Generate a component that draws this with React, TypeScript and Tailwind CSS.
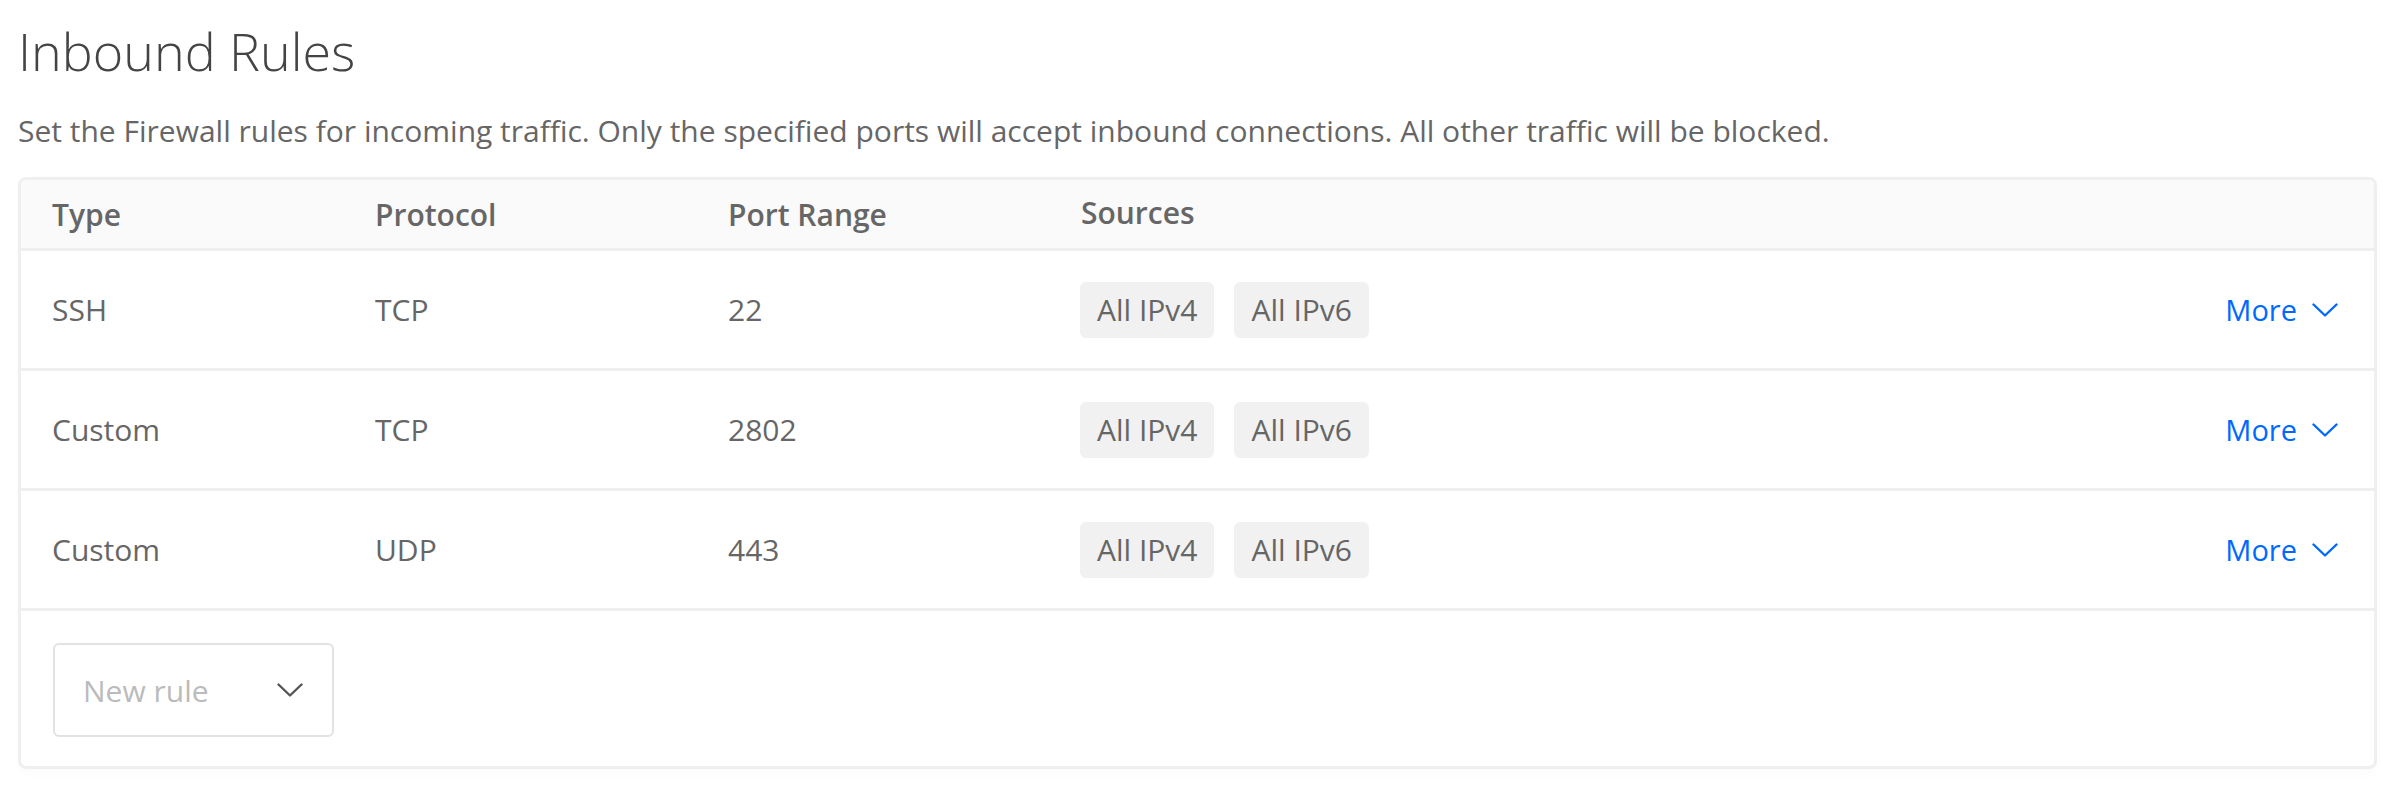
import React from 'react';

type Rule = { type: string; protocol: string; port: string };

const rules: Rule[] = [
  { type: 'SSH', protocol: 'TCP', port: '22' },
  { type: 'Custom', protocol: 'TCP', port: '2802' },
  { type: 'Custom', protocol: 'UDP', port: '443' },
];

function Chevron({ className }: { className?: string }) {
  return (
    <svg viewBox="0 0 26 14" className={className} fill="none" stroke="currentColor" strokeWidth="2.4" strokeLinecap="round" strokeLinejoin="round">
      <polyline points="1.5,1.5 13,12.5 24.5,1.5" />
    </svg>
  );
}

export default function App() {
  return (
    <div className="min-h-screen bg-white pl-[18px] pr-[21px] pt-[25px]" style={{ fontFamily: '"Open Sans", "Liberation Sans", sans-serif' }}>
      <h1 className="text-[52px] leading-[52px] font-light text-[#444]">Inbound Rules</h1>
      <p className="mt-[39px] text-[30px] leading-[30px] text-[#666]">
        Set the Firewall rules for incoming traffic. Only the specified ports will accept inbound connections. All other traffic will be blocked.
      </p>

      <div className="mt-[31px] border-[3px] border-[#efefef] rounded-[8px] overflow-hidden shadow-[0_6px_10px_rgba(0,0,0,0.015)]">
        {/* Header */}
        <div className="flex items-center h-[71px] bg-[#fafafa] border-b-[3px] border-[#efefef] text-[30px] font-semibold text-[#666]">
          <div className="w-[354px] pl-[31px]">Type</div>
          <div className="w-[353px]">Protocol</div>
          <div className="w-[353px]">Port Range</div>
          <div className="flex-1 -mt-[4px]">Sources</div>
        </div>

        {/* Rows */}
        {rules.map((r, i) => (
          <div key={i} className="flex items-center h-[120px] border-b-[3px] border-[#efefef] text-[30px] text-[#666]">
            <div className="w-[354px] pl-[31px]">{r.type}</div>
            <div className="w-[353px]">{r.protocol}</div>
            <div className="w-[353px]">{r.port}</div>
            <div className="flex-1 flex items-center gap-[20px] -ml-[1px]">
              <span className="h-[56px] px-[17px] flex items-center rounded-[6px] bg-[#f1f1f1]">All IPv4</span>
              <span className="h-[56px] px-[17px] flex items-center rounded-[6px] bg-[#f1f1f1]">All IPv6</span>
            </div>
            <div className="flex items-center gap-[15px] pr-[36px] text-[#0069ff]">
              <span className="text-[29px]">More</span>
              <Chevron className="w-[26px] h-[14px]" />
            </div>
          </div>
        ))}

        {/* Footer */}
        <div className="pt-[32px] pb-[29px] pl-[32px]">
          <div className="w-[281px] h-[94px] border-2 border-[#e2e2e2] rounded-[6px] flex items-center justify-between pl-[28px] pr-[29px]">
            <span className="text-[30px] text-[#bbb]">New rule</span>
            <Chevron className="w-[26px] h-[14px] text-[#555]" />
          </div>
        </div>
      </div>
    </div>
  );
}
